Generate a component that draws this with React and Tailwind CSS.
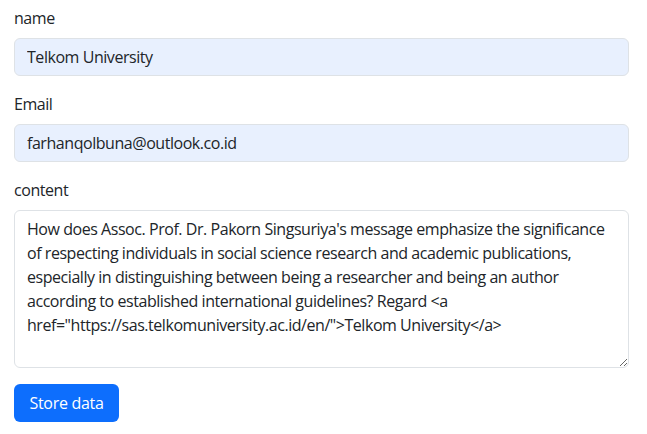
const CONTENT = `How does Assoc. Prof. Dr. Pakorn Singsuriya's message emphasize the significance
of respecting individuals in social science research and academic publications,
especially in distinguishing between being a researcher and being an author
according to established international guidelines? Regard <a
href="https://sas.telkomuniversity.ac.id/en/">Telkom University</a>`;

export default function App() {
  const field =
    "w-full block rounded-[6px] border border-[#dee2e6] px-3 py-[6px] text-[16px] leading-6 tracking-[-0.45px] text-[#212529] outline-none font-['Open_Sans',sans-serif]";

  return (
    <div className="min-h-[434px] bg-white pt-[6px] pl-[14px] pr-[18px] font-['Open_Sans',sans-serif] text-[#212529]">
      <form onSubmit={(e) => e.preventDefault()}>
        <div className="mb-4">
          <label className="block mb-2 text-[16px] leading-6 tracking-[-0.45px]">name</label>
          <input
            type="text"
            defaultValue="Telkom University"
            className={`${field} h-[38px] bg-[#e8f0fe]`}
          />
        </div>

        <div className="mb-4">
          <label className="block mb-2 text-[16px] leading-6 tracking-[-0.45px]">Email</label>
          <input
            type="email"
            defaultValue="farhanqolbuna@outlook.co.id"
            className={`${field} h-[38px] bg-[#e8f0fe]`}
          />
        </div>

        <div className="mb-4">
          <label className="block mb-2 text-[16px] leading-6 tracking-[-0.45px]">content</label>
          <textarea
            rows={6}
            wrap="off"
            defaultValue={CONTENT}
            className={`${field} h-[158px] bg-white overflow-hidden resize-y`}
          />
        </div>

        <button
          type="submit"
          className="h-[38px] w-[105px] rounded-[6px] bg-[#0d6efd] px-3 text-[16px] leading-6 font-medium tracking-[-0.3px] text-white"
        >
          Store data
        </button>
      </form>
    </div>
  );
}
